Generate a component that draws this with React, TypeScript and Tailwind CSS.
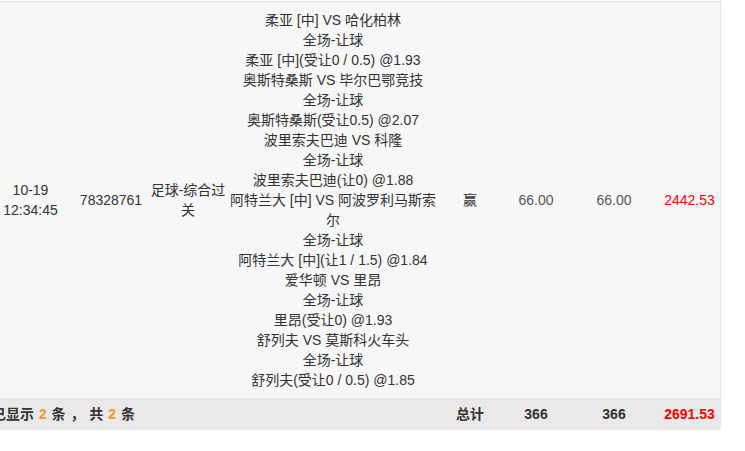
const legs = [
  ['柔亚 [中] VS 哈化柏林', '全场-让球', '柔亚 [中](受让0 / 0.5) @1.93'],
  ['奥斯特桑斯 VS 毕尔巴鄂竞技', '全场-让球', '奥斯特桑斯(受让0.5) @2.07'],
  ['波里索夫巴迪 VS 科隆', '全场-让球', '波里索夫巴迪(让0) @1.88'],
  ['阿特兰大 [中] VS 阿波罗利马斯索尔', '全场-让球', '阿特兰大 [中](让1 / 1.5) @1.84'],
  ['爱华顿 VS 里昂', '全场-让球', '里昂(受让0) @1.93'],
  ['舒列夫 VS 莫斯科火车头', '全场-让球', '舒列夫(受让0 / 0.5) @1.85'],
];

export default function App() {
  return (
    <div
      className="w-[745px] h-[451px] bg-white overflow-hidden text-[14px] leading-[20px] text-[#333]"
      style={{ fontFamily: '"Liberation Sans", "Noto Sans CJK SC", sans-serif' }}
    >
      <div className="w-[721px] mt-px border-t border-[#e6e6e6]">
        {/* bet row */}
        <div className="flex items-center bg-[#f7f7f7] border-r border-[#e6e6e6]">
          <div className="w-[61px] shrink-0 text-center">
            <div>10-19</div>
            <div>12:34:45</div>
          </div>
          <div className="w-[86px] shrink-0 pl-[14px] text-center">78328761</div>
          <div className="w-[82px] shrink-0 px-[3px] text-center">足球-综合过关</div>
          <div className="w-[208px] shrink-0 pt-[8px] pb-[8px] text-center">
            {legs.map((leg, i) => (
              <div key={i}>
                {leg.map((line, j) => (
                  <div key={j}>{line}</div>
                ))}
              </div>
            ))}
          </div>
          <div className="w-[66px] shrink-0 text-center">赢</div>
          <div className="w-[66px] shrink-0 text-center text-[#555]">66.00</div>
          <div className="w-[90px] shrink-0 text-center text-[#555]">66.00</div>
          <div className="w-[61px] shrink-0 text-center text-[#ff0000]">2442.53</div>
        </div>

        {/* totals */}
        <div className="flex items-center h-[32px] bg-[#ebe8e9] font-bold">
          <div className="w-[437px] shrink-0 whitespace-nowrap">
            <span className="-ml-2 inline-block [word-spacing:1px]">
              已显示 <span className="text-[#f39a1e]">2</span> 条 ， 共 <span className="text-[#f39a1e]">2</span> 条
            </span>
          </div>
          <div className="w-[66px] shrink-0 text-center">总计</div>
          <div className="w-[66px] shrink-0 text-center">366</div>
          <div className="w-[90px] shrink-0 text-center">366</div>
          <div className="w-[61px] shrink-0 text-center text-[#ff0000]">2691.53</div>
        </div>
      </div>
    </div>
  );
}
